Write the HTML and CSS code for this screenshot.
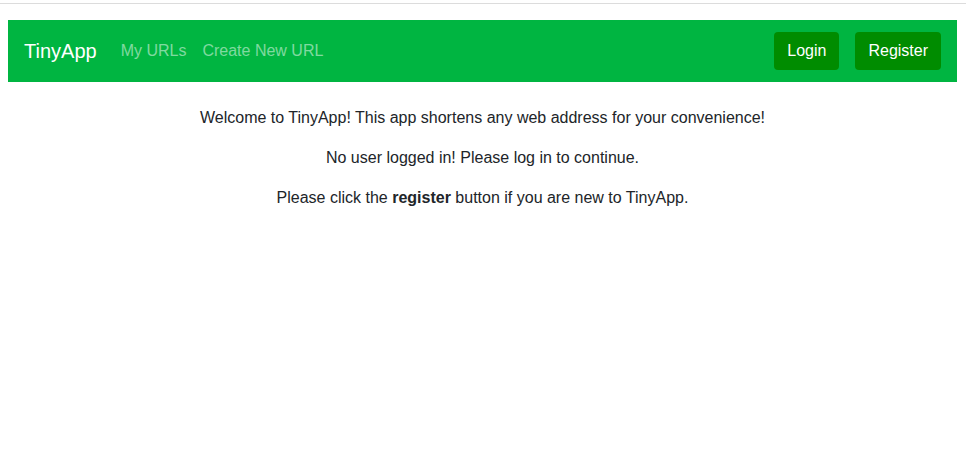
FILE: index.html
```html
<!DOCTYPE html>
<html lang="en">
<head>
<meta charset="utf-8">
<title>TinyApp</title>
<link rel="stylesheet" href="styles.css">
</head>
<body>
<div class="top-rule"></div>
<div class="page">
  <nav class="navbar">
    <div class="nav-left">
      <a class="brand" href="#">TinyApp</a>
      <a class="nav-link" href="#">My URLs</a>
      <a class="nav-link" href="#">Create New URL</a>
    </div>
    <div class="nav-right">
      <button class="btn">Login</button>
      <button class="btn">Register</button>
    </div>
  </nav>
  <main class="content">
    <p>Welcome to TinyApp! This app shortens any web address for your convenience!</p>
    <p>No user logged in! Please log in to continue.</p>
    <p>Please click the <b>register</b> button if you are new to TinyApp.</p>
  </main>
</div>
</body>
</html>
```
FILE: styles.css
```css
html, body {
  margin: 0;
  padding: 0;
  background: #fff;
}
body {
  font-family: "Liberation Sans", Arial, sans-serif;
  font-size: 16px;
  line-height: 1.5;
  color: #212529;
}
.top-rule {
  margin-top: 3px;
  height: 1px;
  background: #dcdcdc;
}
.page {
  padding: 16px 9px 8px 8px;
}
.navbar {
  display: flex;
  align-items: center;
  justify-content: space-between;
  background: #00b541;
  padding: 12px 16px;
  height: 38px;
}
.nav-left {
  display: flex;
  align-items: center;
}
.brand {
  color: #fff;
  font-size: 20px;
  line-height: 30px;
  text-decoration: none;
  margin-right: 16px;
}
.nav-link {
  color: rgba(255, 255, 255, 0.5);
  text-decoration: none;
  padding: 8px;
  line-height: 24px;
}
.nav-right {
  display: flex;
  gap: 16px;
}
.btn {
  font-family: inherit;
  font-size: 16px;
  line-height: 24px;
  padding: 7px 13px;
  border: 0;
  border-radius: 4px;
  background: #008c00;
  color: #fff;
  cursor: pointer;
}
.content {
  padding-top: 24px;
  text-align: center;
}
.content p {
  margin: 0 0 16px;
}
```
